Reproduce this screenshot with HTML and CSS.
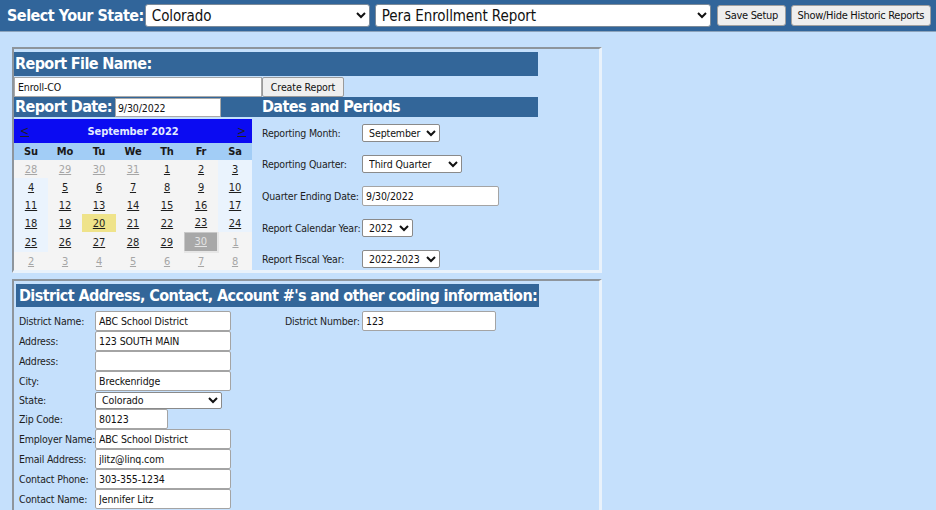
FILE: index.html
```html
<!DOCTYPE html>
<html lang="en">
<head>
<meta charset="utf-8">
<title>Pera Enrollment Report</title>
<link rel="stylesheet" href="styles.css">
</head>
<body>
<header class="topbar">
  <span class="tb-label">Select Your State:</span>
  <select class="tb-select tb-state"><option>Colorado</option></select>
  <select class="tb-select tb-report"><option>Pera Enrollment Report</option></select>
  <button class="tb-btn tb-save">Save Setup</button>
  <button class="tb-btn tb-hist">Show/Hide Historic Reports</button>
</header>

<main class="main">
  <section class="panel panel-report">
    <div class="bar bar-file">Report File Name:</div>
    <div class="file-row">
      <input class="file-input" type="text" value="Enroll-CO">
      <button class="create-btn">Create Report</button>
    </div>
    <div class="split-row">
      <div class="bar bar-date">Report Date: <input class="date-input" type="text" value="9/30/2022"></div>
      <div class="bar bar-periods">Dates and Periods</div>
    </div>
    <div class="split-body">
      <table class="cal">
        <colgroup>
          <col class="cal-col"><col class="cal-col"><col class="cal-col"><col class="cal-col"><col class="cal-col"><col class="cal-col"><col class="cal-col">
        </colgroup>
        <tr class="cal-head">
          <td class="cal-nav nav-prev"><a>&lt;</a></td>
          <td class="cal-title" colspan="5">September 2022</td>
          <td class="cal-nav nav-next"><a>&gt;</a></td>
        </tr>
        <tr class="cal-days">
          <th>Su</th><th>Mo</th><th>Tu</th><th>We</th><th>Th</th><th>Fr</th><th>Sa</th>
        </tr>
        <tr>
          <td class="other"><a>28</a></td><td class="other"><a>29</a></td><td class="other"><a>30</a></td><td class="other"><a>31</a></td><td><a>1</a></td><td><a>2</a></td><td class="wkend"><a>3</a></td>
        </tr>
        <tr>
          <td class="wkend"><a>4</a></td><td><a>5</a></td><td><a>6</a></td><td><a>7</a></td><td><a>8</a></td><td><a>9</a></td><td class="wkend"><a>10</a></td>
        </tr>
        <tr>
          <td class="wkend"><a>11</a></td><td><a>12</a></td><td><a>13</a></td><td><a>14</a></td><td><a>15</a></td><td><a>16</a></td><td class="wkend"><a>17</a></td>
        </tr>
        <tr>
          <td class="wkend"><a>18</a></td><td><a>19</a></td><td class="today"><a>20</a></td><td><a>21</a></td><td><a>22</a></td><td><a>23</a></td><td class="wkend"><a>24</a></td>
        </tr>
        <tr class="row-sel">
          <td class="wkend"><a>25</a></td><td><a>26</a></td><td><a>27</a></td><td><a>28</a></td><td><a>29</a></td><td class="selected"><a>30</a></td><td class="other"><a>1</a></td>
        </tr>
        <tr>
          <td class="other"><a>2</a></td><td class="other"><a>3</a></td><td class="other"><a>4</a></td><td class="other"><a>5</a></td><td class="other"><a>6</a></td><td class="other"><a>7</a></td><td class="other"><a>8</a></td>
        </tr>
      </table>

      <div class="periods">
        <div class="prow"><label class="plabel">Reporting Month:</label><select class="psel w-month"><option>September</option></select></div>
        <div class="prow"><label class="plabel">Reporting Quarter:</label><select class="psel w-quarter"><option>Third Quarter</option></select></div>
        <div class="prow"><label class="plabel">Quarter Ending Date:</label><input class="pinput" type="text" value="9/30/2022"></div>
        <div class="prow"><label class="plabel">Report Calendar Year:</label><select class="psel w-year"><option>2022</option></select></div>
        <div class="prow"><label class="plabel">Report Fiscal Year:</label><select class="psel w-fiscal"><option>2022-2023</option></select></div>
      </div>
    </div>
  </section>

  <section class="panel panel-district">
    <h2 class="dist-bar">District Address, Contact, Account #'s and other coding information:</h2>
    <div class="dist-body">
      <div class="dist-grid">
        <label>District Name:</label><input class="dinput" type="text" value="ABC School District">
        <label>Address:</label><input class="dinput" type="text" value="123 SOUTH MAIN">
        <label>Address:</label><input class="dinput" type="text" value="">
        <label>City:</label><input class="dinput" type="text" value="Breckenridge">
        <label>State:</label><select class="dsel"><option>Colorado</option></select>
        <label>Zip Code:</label><input class="dinput zip" type="text" value="80123">
        <label>Employer Name:</label><input class="dinput" type="text" value="ABC School District">
        <label>Email Address:</label><input class="dinput" type="text" value="jlitz@linq.com">
        <label>Contact Phone:</label><input class="dinput" type="text" value="303-355-1234">
        <label>Contact Name:</label><input class="dinput" type="text" value="Jennifer Litz">
      </div>
      <div class="dist-right">
        <label>District Number:</label><input class="dinput num" type="text" value="123">
      </div>
    </div>
  </section>
</main>
</body>
</html>
```

FILE: styles.css
```css
* { box-sizing: border-box; }

html, body {
  margin: 0;
  padding: 0;
  height: 100%;
  overflow: hidden;
}

body {
  background: #c5e0fc;
  font-family: "DejaVu Sans Condensed", "DejaVu Sans", sans-serif;
  font-size: 10.5px;
  letter-spacing: -0.2px;
  color: #1e1e1e;
}

input, select, button {
  font-family: inherit;
  letter-spacing: -0.1px;
  color: #111;
  margin: 0;
}

/* ---------- top bar ---------- */
.topbar {
  height: 32px;
  background: #31659a;
  border-bottom: 1px solid #8da4bc;
  display: flex;
  align-items: center;
  padding: 0 0 0 7px;
}

.topbar > * { flex: none; }

.tb-label {
  color: #fff;
  font-weight: bold;
  font-size: 16px;
  letter-spacing: -0.5px;
  margin-right: 1px;
  white-space: nowrap;
}

.tb-select {
  height: 23px;
  font-size: 15px;
  letter-spacing: -0.1px;
  background: #fff;
  border: 1px solid #7b8a99;
  border-radius: 3px;
  padding: 0 2px;
  margin-right: 5px;
}
.tb-state { width: 225px; }
.tb-report { width: 336px; margin-right: 6px; }

.tb-btn {
  height: 21px;
  font-size: 11px;
  letter-spacing: -0.3px;
  white-space: nowrap;
  background: #eeeeee;
  border: 1px solid #a0a0a0;
  border-radius: 3px;
  padding: 0;
  margin-right: 5px;
}
.tb-save { width: 69px; }
.tb-hist { width: 140px; }

/* ---------- main ---------- */
.main {
  padding: 15px 0 0 12px;
}

.panel {
  width: 590px;
  border-style: solid;
  border-width: 2px 3px 3px 2px;
  border-color: #8e959c #e9f2fb #e9f2fb #8e959c;
}

.panel-report {
  height: 226px;
  padding-top: 3px;
}

.bar {
  background: #336699;
  color: #fff;
  font-weight: bold;
  font-size: 16px;
  letter-spacing: -0.6px;
  white-space: nowrap;
}

.bar-file {
  width: 524px;
  height: 24px;
  line-height: 24px;
  padding-left: 1px;
}

.file-row {
  display: flex;
  margin-top: 1px;
  height: 20px;
}

.file-input {
  width: 248px;
  height: 20px;
  font-size: 10.5px;
  border: 1px solid #a9a9a9;
  padding: 0 3px;
  background: #fff;
}

.create-btn {
  width: 82px;
  height: 20px;
  font-size: 10.5px;
  white-space: nowrap;
  background: #efefef;
  border: 1px solid #9a9a9a;
  border-radius: 2px;
  padding: 0;
}

.split-row {
  display: flex;
  height: 20px;
}

.bar-date {
  width: 244px;
  height: 20px;
  line-height: 20px;
  padding-left: 1px;
  display: flex;
  align-items: center;
}

.date-input {
  width: 106px;
  height: 19px;
  margin-left: 3px;
  margin-top: 1px;
  font-size: 10.5px;
  font-weight: normal;
  border: 1px solid #a9a9a9;
  padding: 0 2px;
  background: #fff;
}

.bar-periods {
  width: 280px;
  height: 20px;
  line-height: 20px;
  padding-left: 4px;
}

.split-body {
  display: flex;
  margin-top: 2px;
}

/* ---------- calendar ---------- */
.cal {
  width: 238px;
  border-collapse: collapse;
  border-spacing: 0;
  table-layout: fixed;
  font-size: 11px;
  letter-spacing: -0.1px;
  flex: none;
}

.cal-col { width: 34px; }

.cal td, .cal th {
  padding: 0;
  text-align: center;
}

.cal .cal-head td {
  background: #0b0bf2;
  height: 24px;
  color: #e2eaff;
  font-weight: bold;
  font-size: 11px;
}

.cal .cal-head td.nav-prev { text-align: left; padding-left: 6px; }
.cal .cal-head td.nav-next { text-align: right; padding-right: 6px; }
.cal-nav a {
  text-decoration: underline;
  font-weight: normal;
  font-size: 12px;
  color: #d8e4ff;
}

.cal-days th {
  background: #a2cdf6;
  height: 17px;
  font-weight: bold;
  font-size: 11px;
  color: #1a1a1a;
}

.cal td {
  height: 18px;
  background: #f4f4f4;
}

.cal td a {
  color: #1f1f1f;
  text-decoration: underline;
}

.cal td.wkend { background: #eaf3fd; }
.cal td.other a { color: #a6a6a6; }
.cal td.today { background: #efe38a; }
.cal .row-sel td { height: 20px; }
.cal td.selected {
  background: #a8a8a8;
  border-style: solid;
  border-width: 1px 2px 2px 1px;
  border-color: #c8c8c8 #e6e6e6 #e6e6e6 #c8c8c8;
}
.cal td.selected a { color: #e4e4e4; }

/* ---------- periods ---------- */
.periods {
  display: flex;
  flex-direction: column;
  gap: 13px;
  padding: 5px 0 0 10px;
}

.prow {
  display: flex;
  align-items: center;
}

.plabel {
  width: 100px;
  white-space: nowrap;
}

.psel {
  height: 18px;
  font-size: 10.5px;
  background: #fff;
  border: 1px solid #8a8a8a;
  border-radius: 2px;
  padding: 0 2px;
}
.w-month { width: 78px; }
.w-quarter { width: 100px; }
.w-year { width: 51px; }
.w-fiscal { width: 78px; }

.pinput {
  width: 137px;
  height: 20px;
  font-size: 10.5px;
  border: 1px solid #a4a4a4;
  border-radius: 2px;
  padding: 0 3px;
  background: #fff;
}

/* ---------- district ---------- */
.panel-district {
  margin-top: 6px;
  height: 240px;
  padding: 3px 0 0 2px;
}

.dist-bar {
  display: inline-block;
  margin: 0;
  background: #336699;
  color: #fff;
  font-size: 16px;
  letter-spacing: -0.6px;
  font-weight: bold;
  height: 23px;
  line-height: 23px;
  padding: 0 2px 0 3px;
  white-space: nowrap;
}

.dist-body {
  display: flex;
  margin-top: 4px;
  padding-left: 3px;
}

.dist-grid {
  display: grid;
  grid-template-columns: 76px 136px;
  grid-template-rows: repeat(4, 20px) 18px repeat(5, 20px);
  align-items: center;
}

.dist-grid label, .dist-right label {
  white-space: nowrap;
}

.dinput {
  width: 136px;
  height: 20px;
  font-size: 10.5px;
  border: 1px solid #a4a4a4;
  border-radius: 2px;
  padding: 0 3px;
  background: #fff;
}
.dinput.zip { width: 73px; }
.dinput.num { width: 134px; }

.dsel {
  width: 127px;
  height: 17px;
  font-size: 10.5px;
  background: #fff;
  border: 1px solid #8a8a8a;
  border-radius: 2px;
  padding: 0 2px;
}

.dist-right {
  display: flex;
  align-items: center;
  height: 20px;
  margin-left: 54px;
}
.dist-right label { width: 77px; }
```
